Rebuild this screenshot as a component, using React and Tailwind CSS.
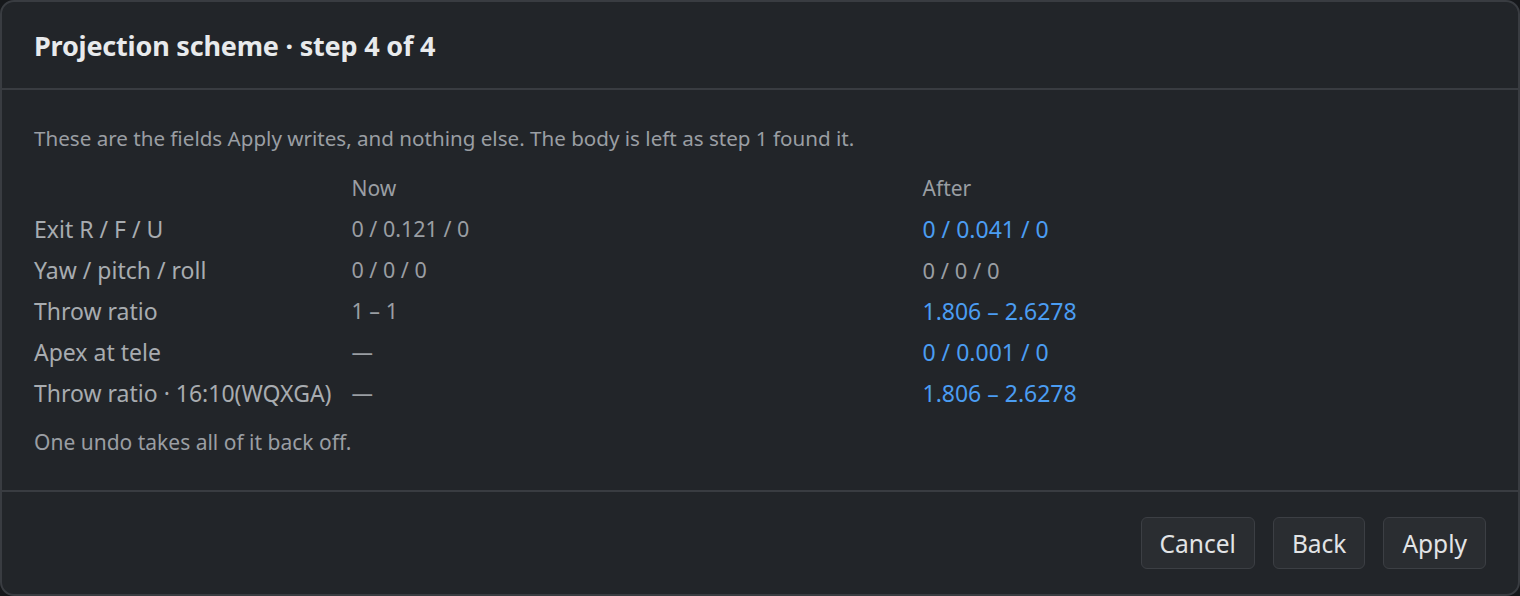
import React from "react";

const rows = [
  { label: "Exit R / F / U", now: "0 / 0.121 / 0", after: "0 / 0.041 / 0", changed: true },
  { label: "Yaw / pitch / roll", now: "0 / 0 / 0", after: "0 / 0 / 0", changed: false },
  { label: "Throw ratio", now: "1 – 1", after: "1.806 – 2.6278", changed: true },
  { label: "Apex at tele", now: "—", after: "0 / 0.001 / 0", changed: true },
  { label: "Throw ratio · 16:10(WQXGA)", now: "—", after: "1.806 – 2.6278", changed: true },
];

export default function App() {
  return (
    <div className="h-[596px] w-full bg-[#16181b]" style={{ fontFamily: '"Noto Sans", "Open Sans", sans-serif' }}>
      <div className="flex h-full flex-col rounded-[14px] border-2 border-[#393c41] bg-[#222529]">
        <div className="flex h-[88px] items-center border-b-2 border-[#393c41] px-[32px] pt-[3px]">
          <h1 className="text-[27px] font-bold tracking-[-0.2px] text-[#e8eaec]">Projection scheme · step 4 of 4</h1>
        </div>
        <div className="flex-1 px-[32px] pt-[34px]">
          <p className="text-[20.6px] leading-[28px] text-[#9a9ea3]">
            These are the fields Apply writes, and nothing else. The body is left as step 1 found it.
          </p>
          <div className="mt-[22px] grid grid-cols-[auto_551px_1fr] gap-x-[20px] leading-[28px]">
            <div />
            <div className="text-[21px] text-[#9a9ea3]">Now</div>
            <div className="text-[21px] text-[#9a9ea3]">After</div>
            {rows.map((r) => (
              <React.Fragment key={r.label}>
                <div className="mt-[13px] text-[23px] text-[#a8acb0]">{r.label}</div>
                <div className="mt-[13px] text-[21.5px] text-[#9a9ea3]">{r.now}</div>
                <div className={`mt-[13px] ${r.changed ? "text-[23px] text-[#4b9df2]" : "text-[22px] text-[#9a9ea3]"}`}>{r.after}</div>
              </React.Fragment>
            ))}
          </div>
          <p className="mt-[21px] text-[21px] leading-[28px] text-[#9a9ea3]">One undo takes all of it back off.</p>
        </div>
        <div className="flex h-[104px] items-center justify-end gap-[18px] border-t-2 border-[#393c41] px-[32px]">
          {["Cancel", "Back", "Apply"].map((b) => (
            <button
              key={b}
              className="h-[52px] rounded-[6px] border border-[#3c3f44] bg-[#2a2d31] px-[18px] pt-[3px] text-[24.5px] text-[#e2e4e6]"
            >
              {b}
            </button>
          ))}
        </div>
      </div>
    </div>
  );
}
